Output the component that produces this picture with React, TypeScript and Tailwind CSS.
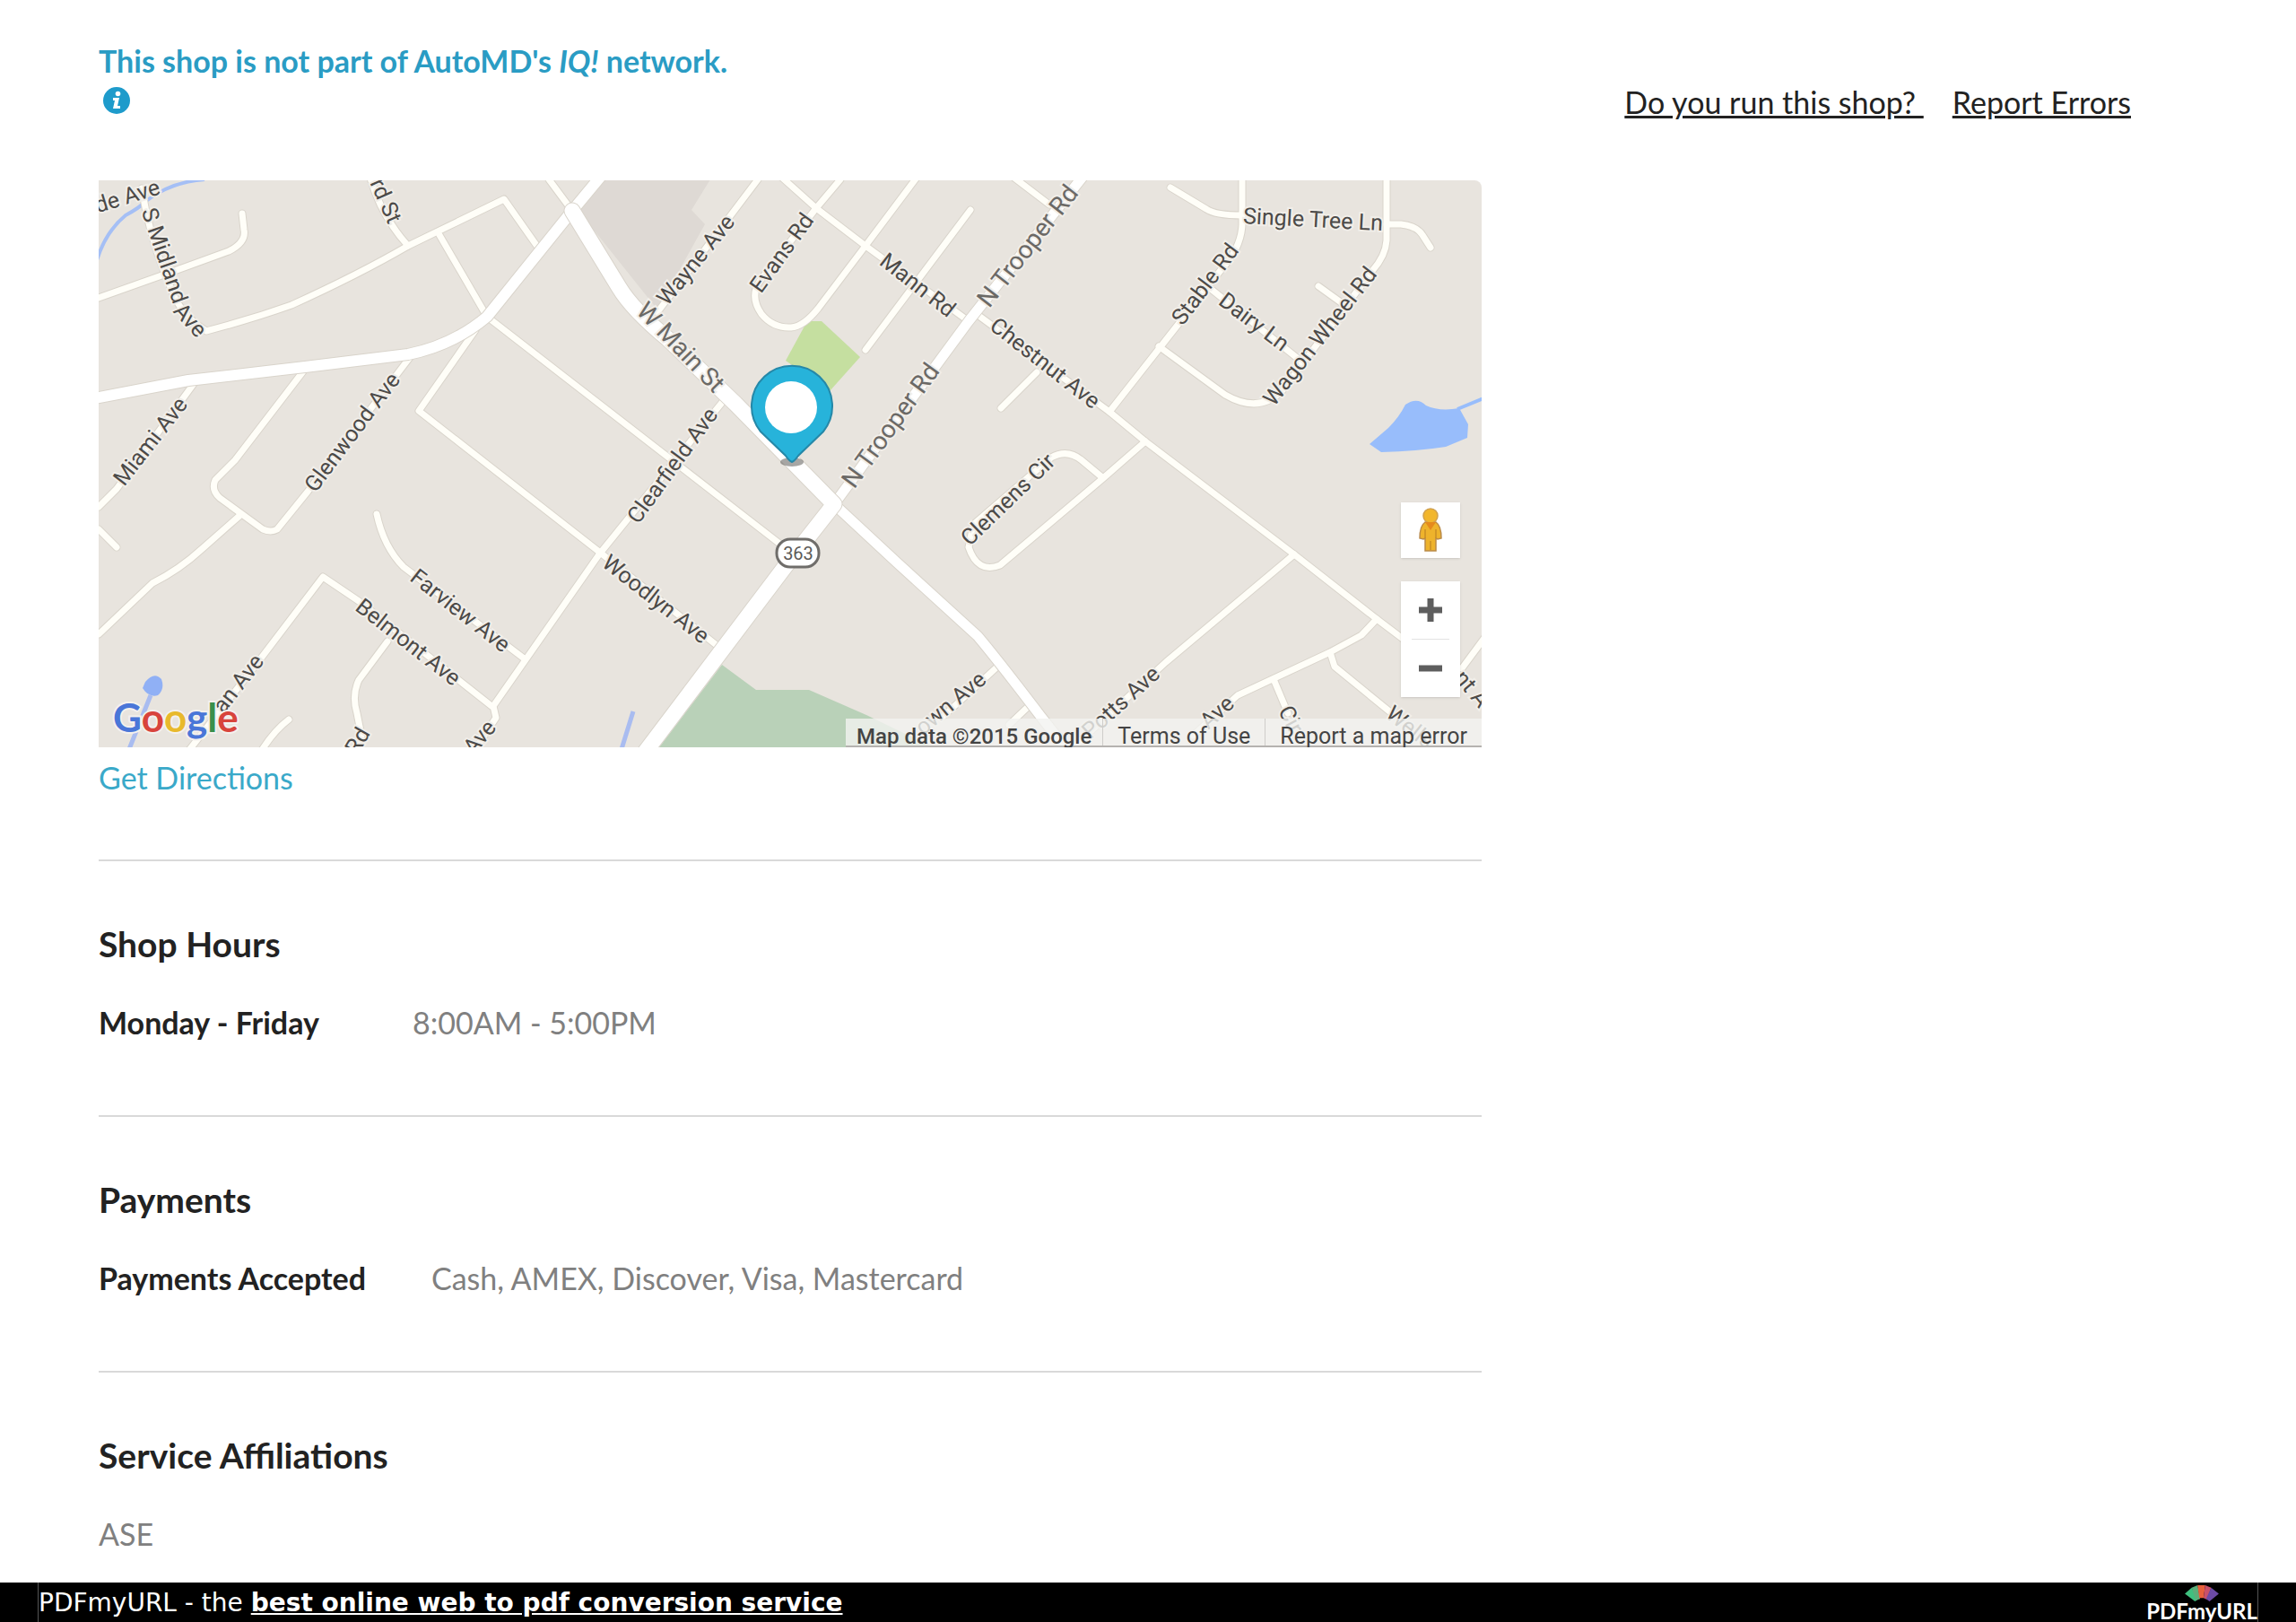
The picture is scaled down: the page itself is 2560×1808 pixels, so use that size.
import type { ReactNode } from "react";

type Label = { text: string; x: number; y: number; angle: number; main?: boolean };

const LABELS: Label[] = [
  { text: "de Ave", x: 142, y: 219, angle: -17 },
  { text: "S Midland", x: 183, y: 285, angle: 71 },
  { text: "Ave", x: 212, y: 357, angle: 48 },
  { text: "rd St", x: 430, y: 224, angle: 66 },
  { text: "Wayne Ave", x: 776, y: 290, angle: -51 },
  { text: "Evans Rd", x: 872, y: 282, angle: -54 },
  { text: "Mann Rd", x: 1023, y: 318, angle: 38 },
  { text: "N Trooper Rd", x: 1147, y: 275, angle: -52, main: true },
  { text: "N Trooper Rd", x: 994, y: 475, angle: -54, main: true },
  { text: "W Main St", x: 758, y: 388, angle: 46, main: true },
  { text: "Chestnut Ave", x: 1165, y: 405, angle: 38 },
  { text: "Stable Rd", x: 1344, y: 317, angle: -53 },
  { text: "Single Tree Ln", x: 1464, y: 245, angle: 3 },
  { text: "Dairy Ln", x: 1398, y: 359, angle: 37 },
  { text: "Wagon Wheel Rd", x: 1472, y: 375, angle: -52 },
  { text: "Miami Ave", x: 168, y: 492, angle: -52 },
  { text: "Glenwood Ave", x: 393, y: 482, angle: -53 },
  { text: "Clearfield Ave", x: 750, y: 519, angle: -54 },
  { text: "Clemens Cir", x: 1124, y: 557, angle: -44 },
  { text: "Woodlyn Ave", x: 731, y: 668, angle: 38 },
  { text: "Farview Ave", x: 513, y: 681, angle: 38 },
  { text: "Belmont Ave", x: 455, y: 716, angle: 38 },
  { text: "an Ave", x: 266, y: 762, angle: -52 },
  { text: "Rd", x: 399, y: 826, angle: -60 },
  { text: "Ave", x: 535, y: 822, angle: -50 },
  { text: "own Ave", x: 1060, y: 784, angle: -40 },
  { text: "Potts Ave", x: 1250, y: 783, angle: -42 },
  { text: "Ave", x: 1357, y: 794, angle: -42 },
  { text: "Cir", x: 1439, y: 802, angle: 62 },
  { text: "Wells", x: 1572, y: 811, angle: 38 },
  { text: "nt A", x: 1641, y: 768, angle: 50 },
];

const STREETS = [
  "M110 332 L200 300 L255 280 Q275 270 272 256 L270 238",
  "M158 210 Q168 270 190 320 Q200 350 230 369 Q280 356 325 340 Q400 306 455 274 L562 222 L600 276",
  "M412 195 Q424 240 455 274",
  "M490 262 L543 353 L868 605",
  "M530 368 L467 458 L668 615 L800 720",
  "M458 397 L343 548 L309 590 Q302 594 293 590 L245 555 Q235 546 240 535 L262 513 L338 414",
  "M218 425 L130 545 L110 565",
  "M110 590 L130 610",
  "M267 575 L225 612 Q200 635 170 650 L110 707",
  "M200 850 L290 735 L360 643 L400 670 L548 787",
  "M808 445 L668 618 L550 787 L553 800 L520 850",
  "M420 573 Q428 610 450 632 L583 733",
  "M432 715 L400 758 Q392 775 398 795 L403 820 L390 850",
  "M322 802 Q306 814 292 836",
  "M612 200 L638 235",
  "M845 200 L733 348",
  "M937 200 L910 232 L848 312 Q835 330 849 350 Q862 366 882 365 Q896 364 912 344 L965 274 L1022 198",
  "M872 198 L910 232 L965 274 L1080 358",
  "M1082 234 L965 390",
  "M1128 196 L1170 228",
  "M1086 348 L1237 459 L1277 492 L1443 618 L1535 690 L1580 724",
  "M1385 198 L1385 250 Q1384 276 1362 300 L1237 459",
  "M1305 209 L1345 233 Q1355 240 1385 240",
  "M1546 198 L1546 268 Q1545 285 1530 302 L1430 435 Q1404 462 1366 440 L1292 386",
  "M1546 250 L1562 250 Q1580 252 1586 262 L1595 276",
  "M1345 318 L1450 402",
  "M1470 319 L1495 337",
  "M1156 415 L1116 455",
  "M1277 492 L1230 533 L1115 630 Q1090 640 1080 610 L1085 585 L1172 510 Q1190 500 1206 513 L1230 533",
  "M1443 618 L1300 738 L1200 830",
  "M1535 690 L1518 708 L1483 727 L1380 775 L1330 820",
  "M1420 757 L1436 795",
  "M1483 727 L1488 743 L1548 792 L1590 826",
  "M1656 710 L1630 745",
  "M1110 745 L1050 800",
  "M1146 788 L1125 808",
];

function Roads({ paths, width, edge = "#d9d4cb", fill = "#fffef8" }: { paths: string[]; width: number; edge?: string; fill?: string }) {
  return (
    <g fill="none" strokeLinecap="round" strokeLinejoin="round">
      {paths.map((d) => (
        <path key={"e" + d} d={d} stroke={edge} strokeWidth={width + 2} />
      ))}
      {paths.map((d) => (
        <path key={d} d={d} stroke={fill} strokeWidth={width} />
      ))}
    </g>
  );
}

function MapDrawing() {
  return (
    <svg viewBox="110 201 1542 632" preserveAspectRatio="xMidYMid slice" className="block h-full w-full font-[Roboto,sans-serif]">
      <rect x="110" y="201" width="1542" height="632" fill="#e8e4de" />
      <path d="M665 200 H792 L771 234 L786 250 L733 345 L645 235 Z" fill="#ded9d4" />
      <path d="M900 358 H916 L959 398 L925 436 L876 402 Z" fill="#c5dfa0" />
      <path d="M805 741 L843 769 H902 L966 797 L1040 833 H735 Z" fill="#b9d1b8" />
      <path d="M108 290 Q118 258 140 240 Q155 232 163 224 Q190 203 228 200" fill="none" stroke="#a5bff5" strokeWidth="4" />
      <path d="M706 793 L693 835 M168 775 L144 835" fill="none" stroke="#a9bcf0" strokeWidth="5" />
      <path d="M162 760 Q172 748 180 757 Q184 768 176 775 Q166 778 159 767 Z" fill="#90b0f5" />
      <path d="M1527 495 L1548 477 Q1560 465 1567 451 Q1580 442 1590 452 Q1605 459 1627 455 L1637 473 L1636 488 L1612 498 Q1580 503 1540 504 Z" fill="#98bdfb" />
      <path d="M1625 456 L1654 444" stroke="#98bdfb" strokeWidth="4" />

      <Roads paths={STREETS} width={7} />
      <Roads
        paths={["M100 445 L210 424 L340 409 L455 395 Q505 385 543 353 L638 235 L672 194"]}
        width={12}
        fill="#ffffff"
      />
      <Roads paths={["M1208 196 L1080 358 L930 562", "M930 562 L1000 627 L1090 709 Q1112 735 1160 798 L1190 836"]} width={11} fill="#ffffff" />
      <Roads paths={["M638 235 L690 320 Q705 345 745 378 L820 450 L930 562 L875 632 L718 840"]} width={17} fill="#ffffff" />

      {LABELS.map((l) => (
        <text
          key={l.text + l.x}
          transform={`translate(${l.x} ${l.y}) rotate(${l.angle})`}
          y={8}
          textAnchor="middle"
          fontSize={l.main ? 28 : 25}
          fill={l.main ? "#6b6966" : "#4c4a48"}
          stroke="#f1eee9"
          strokeWidth="4"
          paintOrder="stroke"
        >
          {l.text}
        </text>
      ))}

      <rect x="866" y="601" width="47" height="31" rx="15" fill="#fff" stroke="#6f6d6a" strokeWidth="3" />
      <text x="890" y="624" textAnchor="middle" fontSize="20" fill="#5c5a58">
        363
      </text>

      {/* shop pin */}
      <ellipse cx="883" cy="515" rx="13" ry="5" fill="#6d6a68" opacity="0.6" />
      <path d="M883 515 Q880 514 876 508 L848 481 A45 45 0 1 1 918 481 L890 508 Q886 514 883 515 Z" fill="#27b3da" stroke="#2588a8" strokeWidth="2" />
      <circle cx="882" cy="454" r="29" fill="#fff" />
    </svg>
  );
}

function GoogleLogo() {
  return (
    <a href="#google" aria-label="Google" className="absolute bottom-1 left-4 font-[Lato,sans-serif] text-[44px] leading-[60px] font-bold [paint-order:stroke] [-webkit-text-stroke:4px_#f4f1ee]">
      <span className="text-[#4a76d8]">G</span>
      <span className="text-[#d8443c]">o</span>
      <span className="text-[#e8b92c]">o</span>
      <span className="text-[#4a76d8]">g</span>
      <span className="text-[#3a8f4c]">l</span>
      <span className="text-[#d8443c]">e</span>
    </a>
  );
}

function Pegman() {
  return (
    <svg viewBox="0 0 28 50" className="h-[50px] w-7">
      <path d="M8 16 Q2 20 2 34 L6 35 L8 34 L8 48 H20 L20 34 L22 35 L26 34 Q26 20 20 16 Z" fill="#eeb32c" stroke="#b98a4a" strokeWidth="1.5" />
      <circle cx="14" cy="9" r="8" fill="#f2b62c" stroke="#cfa050" strokeWidth="1.5" />
      <path d="M8 16 L14 25 L20 16 Z" fill="#e58a1e" />
      <path d="M14 37 V47 M8 24 V34 M20 24 V34" stroke="#c98f24" strokeWidth="1.5" />
    </svg>
  );
}

function ShopMap() {
  return (
    <div className="relative aspect-[1542/632] overflow-hidden rounded-tr-lg">
      <MapDrawing />
      <GoogleLogo />
      <div className="absolute right-6 bottom-14 flex w-[66px] flex-col gap-[26px]">
        <button type="button" aria-label="Street View" className="flex h-[62px] items-center justify-center bg-white shadow-sm">
          <Pegman />
        </button>
        <div className="flex flex-col bg-white shadow-sm">
          <button type="button" aria-label="Zoom in" className="flex h-16 items-center justify-center">
            <svg viewBox="0 0 26 26" className="size-[26px]">
              <path d="M13 0 V26 M0 13 H26" stroke="#5e5e5e" strokeWidth="7" />
            </svg>
          </button>
          <div className="mx-3 h-px bg-[#e2e2e2]" />
          <button type="button" aria-label="Zoom out" className="flex h-16 items-center justify-center">
            <svg viewBox="0 0 26 26" className="size-[26px]">
              <path d="M0 13 H26" stroke="#5e5e5e" strokeWidth="7" />
            </svg>
          </button>
        </div>
      </div>
      <div className="absolute right-0 bottom-0 flex h-8 divide-x divide-[#cfcdca] border-b-2 border-[#b5b3b0] bg-[#f3f2f0]/80 font-[Roboto,sans-serif] text-[25px] leading-10 text-[#444]">
        <span className="px-3 text-[24px] font-medium">Map data ©2015 Google</span>
        <a href="#terms" className="px-4">Terms of Use</a>
        <a href="#map-error" className="px-4">Report a map error</a>
      </div>
    </div>
  );
}

function Section({ title, children }: { title: string; children: ReactNode }) {
  return (
    <section className="border-t-2 border-[#d9d9d9] pt-[62px] pb-[79px] last:pb-[30px]">
      <h2 className="text-[39px] leading-[60px] font-bold text-[#222]">{title}</h2>
      <div className="mt-[34px] text-[34px] leading-[48px] text-[#808080]">{children}</div>
    </section>
  );
}

export default function App() {
  return (
    <div className="bg-white font-[Lato,sans-serif]">
      <main className="grid grid-cols-[minmax(0,1542fr)_minmax(0,724fr)] pr-[184px] pl-[110px]">
        <div>
          <header className="h-[201px] pt-12 text-[#2a9cc4]">
            <p className="text-[34px] leading-10 font-bold">
              This shop is not part of AutoMD's <em>IQ!</em> network.
            </p>
            <button type="button" aria-label="More information" className="mt-2 ml-1 block">
              <svg viewBox="0 0 32 32" className="size-8">
                <circle cx="16" cy="16" r="15" fill="#1e9bcb" />
                <circle cx="17.5" cy="8.5" r="2.8" fill="#fff" />
                <path d="M12 13 H19 L17 22 H20 V25 H12 L14 16 H12 Z" fill="#fff" />
              </svg>
            </button>
          </header>

          <ShopMap />

          <div className="mt-[10px] mb-[67px] text-[34px] leading-[48px]">
            <a href="#directions" className="text-[#3aa9c9]">Get Directions</a>
          </div>

          <Section title="Shop Hours">
            <dl className="flex">
              <dt className="w-[350px] font-bold text-[#222]">Monday - Friday</dt>
              <dd>8:00AM - 5:00PM</dd>
            </dl>
          </Section>
          <Section title="Payments">
            <dl className="flex">
              <dt className="w-[371px] font-bold text-[#222]">Payments Accepted</dt>
              <dd>Cash, AMEX, Discover, Visa, Mastercard</dd>
            </dl>
          </Section>
          <Section title="Service Affiliations">
            <p>ASE</p>
          </Section>
        </div>

        <nav className="flex items-start justify-end gap-8 pt-[90px] text-[34px] leading-[48px] whitespace-pre text-[#222]">
          <a href="#owner" className="underline">{"Do you run this shop? "}</a>
          <a href="#report" className="underline">Report Errors</a>
        </nav>
      </main>

      <footer className="bg-black px-[42px] font-['DejaVu_Sans',sans-serif] text-[28px] text-white">
        <div className="flex h-[45px] items-center justify-between border-x border-[#555]">
          <p>
            PDFmyURL - the{" "}
            <a href="#pdfmyurl" className="font-bold underline">best online web to pdf conversion service</a>
          </p>
          <a href="#pdfmyurl-home" className="flex flex-col items-center font-[Lato,sans-serif] text-[24px] leading-[22px] font-bold">
            <svg viewBox="0 0 40 19" className="h-[18px] w-10">
              <path d="M0 10 L8 3 L15 17 L12 19 Z" fill="#3fc07f" />
              <path d="M8 3 L15 0 L18 16 L13 18 Z" fill="#5cae7a" />
              <path d="M15 0 H24 L22 15 H17 Z" fill="#e8603c" />
              <path d="M24 0 L31 3 L26 17 L22 15 Z" fill="#c9506a" />
              <path d="M31 3 L40 10 L29 19 L25 16 Z" fill="#6c4aa5" />
            </svg>
            <span>PDFmyURL</span>
          </a>
        </div>
      </footer>
    </div>
  );
}
